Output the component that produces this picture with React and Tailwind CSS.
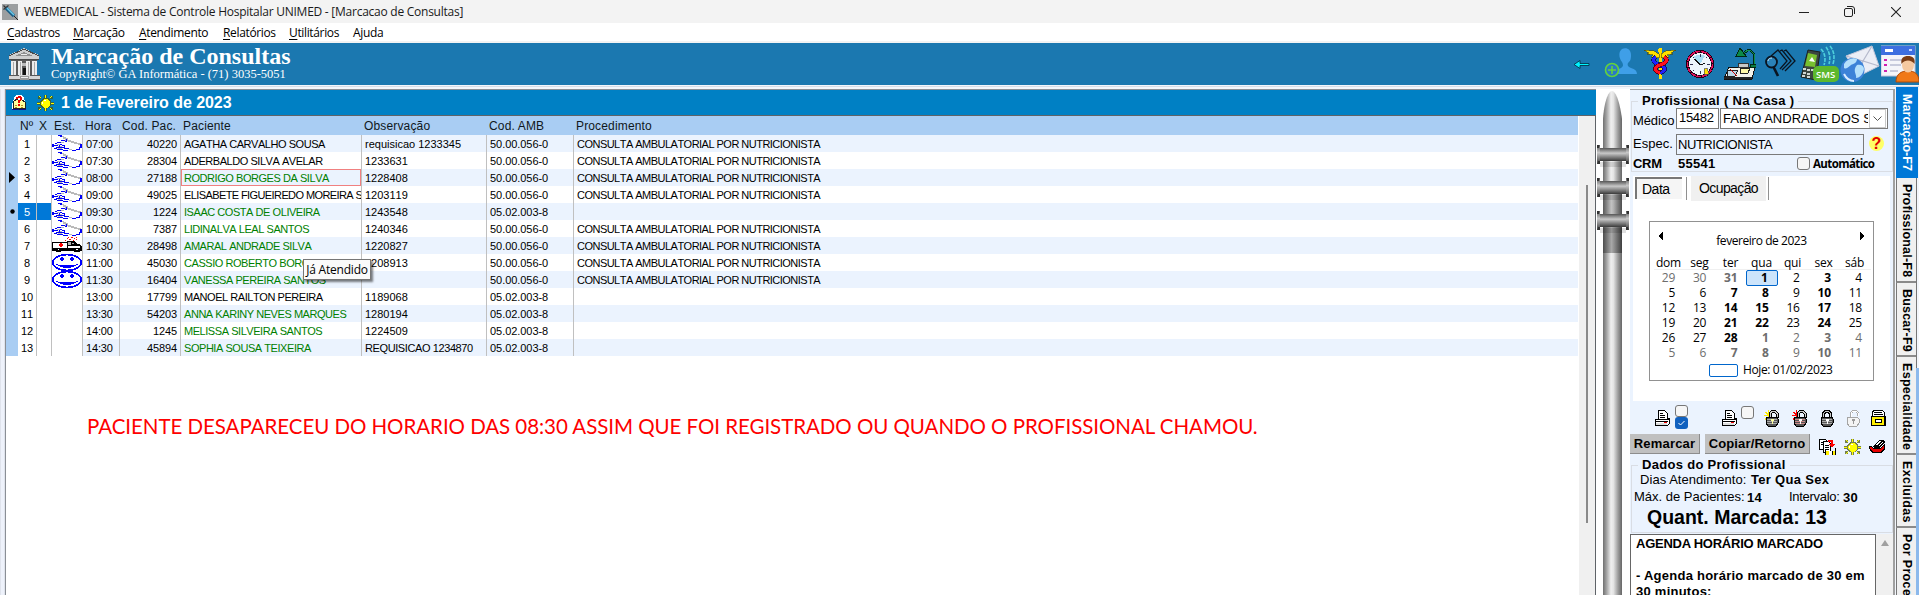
import React from "react";

const PROC = "CONSULTA AMBULATORIAL POR NUTRICIONISTA";
const A = "50.00.056-0";
const B = "05.02.003-8";

const ROWS = [
  { n: 1, icon: "hand", hora: "07:00", cod: "40220", nome: "AGATHA CARVALHO SOUSA", obs: "requisicao 1233345", amb: A, proc: PROC },
  { n: 2, icon: "hand", hora: "07:30", cod: "28304", nome: "ADERBALDO SILVA AVELAR", obs: "1233631", amb: A, proc: PROC },
  { n: 3, icon: "hand", hora: "08:00", cod: "27188", nome: "RODRIGO BORGES DA SILVA", obs: "1228408", amb: A, proc: PROC, green: true, focus: true, mark: "arrow" },
  { n: 4, icon: "hand", hora: "09:00", cod: "49025", nome: "ELISABETE FIGUEIREDO MOREIRA SANTOS", obs: "1203119", amb: A, proc: PROC },
  { n: 5, icon: "hand", hora: "09:30", cod: "1224", nome: "ISAAC COSTA DE OLIVEIRA", obs: "1243548", amb: B, proc: "", green: true, selected: true, mark: "dot" },
  { n: 6, icon: "hand", hora: "10:00", cod: "7387", nome: "LIDINALVA LEAL SANTOS", obs: "1240346", amb: A, proc: PROC, green: true },
  { n: 7, icon: "ambulance", hora: "10:30", cod: "28498", nome: "AMARAL ANDRADE SILVA", obs: "1220827", amb: A, proc: PROC, green: true },
  { n: 8, icon: "smile", hora: "11:00", cod: "45030", nome: "CASSIO ROBERTO BORGES", obs: "1208913", amb: A, proc: PROC, green: true },
  { n: 9, icon: "smile", hora: "11:30", cod: "16404", nome: "VANESSA PEREIRA SANTOS", obs: "", amb: A, proc: PROC, green: true },
  { n: 10, hora: "13:00", cod: "17799", nome: "MANOEL RAILTON PEREIRA", obs: "1189068", amb: B, proc: "" },
  { n: 11, hora: "13:30", cod: "54203", nome: "ANNA KARINY NEVES MARQUES", obs: "1280194", amb: B, proc: "", green: true },
  { n: 12, hora: "14:00", cod: "1245", nome: "MELISSA SILVEIRA SANTOS", obs: "1224509", amb: B, proc: "", green: true },
  { n: 13, hora: "14:30", cod: "45894", nome: "SOPHIA SOUSA TEIXEIRA", obs: "REQUISICAO 1234870", amb: B, proc: "", green: true },
];

const GRID = "grid shrink-0 grid-cols-[12px_19px_15px_31px_37px_61px_181px_125px_87px_1fr]";

function Svg({ w, h, className = "", smooth, children }) {
  return (
    <svg width={w} height={h} viewBox={`0 0 ${w} ${h}`} shapeRendering={smooth ? "auto" : "crispEdges"} className={`block shrink-0 ${className}`} fill="none">
      {children}
    </svg>
  );
}

/* ---------- table state icons ---------- */
const Hand = () => (
  <Svg w={30} h={17} className="overflow-visible">
    <path d="M10 1h2v1h2v1h2v2h3v1h3v1h3v1h4v2h-3V9h-4V8h-3V7h-3V6h-3V4h-2V2h-2z" fill="#b9b9b9" />
    <path d="M6 0h4v1H6zM8 1h2v1H8zM9 5h4v1H9zM13 6h2v1h-2zM5 7h4v1H5zM3 8h2v1H3zM0 9h2v3H0zM2 10h4v1H2zM8 9h2v1H8zM10 10h3v1h-3zM4 12h8v1H4zM2 13h3v1H2zM12 11h1v3h-1zM13 13h4v1h-4zM5 14h6v1H5zM11 15h5v1h-5zM20 15h4v1h-4zM24 14h4v1h-4zM28 9h2v4h-2zM27 12h1v2h-1z" fill="#0000f8" />
    <path d="M5 9h3v1H5zM6 11h4v1H6zM6 13h4v1H6zM9 7h3v1H9zM17 14h3v1h-3z" fill="#b9b9b9" />
    <path d="M7 10h1v3H7zM14 4h1v2h-1z" fill="#0000f8" />
  </Svg>
);
const Ambulance = () => (
  <Svg w={30} h={17}>
    <path d="M0 5h15V4h7l3 3h3l2 3v4H0z" fill="#000" />
    <path d="M1 6h14v5H1zM16 9h12v2H16z" fill="#fff" />
    <path d="M16 5h3v3h-3zM20 6h2v1h-2z" fill="#b0b0b0" />
    <path d="M8 6h2v1h1v2h-1v1H8V9H7V7h1z" fill="#f00" />
    <path d="M13 3h1v1h-1zM15 1h1v1h-1zM17 2h2v1h-2zM19 0h2v1h-2zM22 1h1v1h-1zM24 2h1v1h-1zM21 3h1v1h-1zM16 0h1v1h-1zM24 0h1v1h-1z" fill="#f00" />
    <path d="M4 11h5v4H4zM22 11h6v4h-6z" fill="#000" />
    <path d="M6 12h1v1H6zM24 12h2v1h-2z" fill="#fff" />
  </Svg>
);
const Smile = () => (
  <Svg w={30} h={17} className="overflow-visible">
    <ellipse cx="15" cy="8.500" rx="14" ry="8" fill="#fff" stroke="#0000ff" strokeWidth="1.800" />
    <path d="M9 3h2v1h1v2h-1v1H9V6H8V4h1zM19 3h2v1h1v2h-1v1h-2V6h-1V4h1zM4 10h2v1h18v-1h2v1h-2v1h-2v1h-3v1h-8v-1H8v-1H6v-1H4z" fill="#0000ff" />
  </Svg>
);
const STATE = { hand: Hand, ambulance: Ambulance, smile: Smile };

/* ---------- small icons ---------- */
const Syringe = () => (
  <Svg w={16} h={16} smooth>
    <rect width="16" height="16" fill="#9c9fa0" />
    <path d="M1.500 1.500l3 3M1.500 5.500l5-4" stroke="#333" strokeWidth="1.200" />
    <path d="M4 4l8 8" stroke="#1b5f86" strokeWidth="3.400" />
    <path d="M5 4l7 7" stroke="#6cc8e8" strokeWidth="1.600" />
    <path d="M12 12l4 4" stroke="#222" strokeWidth="1" />
  </Svg>
);

const Bank = () => (
  <Svg w={33} h={33}>
    <path d="M16 0l4 2 11 5v5H1V7l11-5z" fill="#cfcfcf" />
    <path d="M16 1l15 7M16 1L1 8M1 11.500h30" stroke="#4a4a4a" />
    <path d="M16 4l9 4H7z" fill="#8f8f8f" />
    <path d="M13 6h6v1h-6z" fill="#eee" />
    <path d="M3 12h26v16H3z" fill="#5a5a5a" />
    <path d="M3 13h5v14H3zM10 13h4v14h-4zM18 13h4v14h-4zM24 13h5v14h-5z" fill="#ececec" />
    <path d="M5 14h1v13H5zM12 14h1v13h-1zM20 14h1v13h-1zM26 14h1v13h-1z" fill="#a8a8a8" />
    <path d="M15 20h3v8h-3z" fill="#111" />
    <path d="M14 15h4v3h-4z" fill="#bbb" />
    <path d="M1 27h31v5H1z" fill="#d6d6d6" />
    <path d="M1 31.500h31M1 27.500h10M22 27.500h10" stroke="#5a5a5a" />
    <path d="M12 28h9v4h-9z" fill="#9a9a9a" />
    <path d="M13 29h7v1h-7z" fill="#eee" />
  </Svg>
);

const Book = () => (
  <Svg w={16} h={16}>
    <path d="M5 0h6l2 3 2 7v4H1v-4l2-7z" fill="#fff" />
    <path d="M2 7l4-3 2 2 2-2 4 3v7l-5-1-1 2-1-2-5 1z" fill="#ffff9c" stroke="#222" strokeWidth="1" />
    <path d="M5 2h2V1h3v1h1v3h-1v1H9v2H7V5h2V3H7v1H5z" fill="#e00" />
    <path d="M7 9h2v2H7z" fill="#e00" />
    <path d="M1 14h6l1 1 1-1h6v1H1z" fill="#111188" />
    <path d="M4 10h2M10 10h2M4 12h2M10 12h2" stroke="#b58a20" />
  </Svg>
);

const Sun = () => (
  <Svg w={17} h={16}>
    <path d="M7 0h3v3H7zM7 13h3v3H7zM0 7h3v3H0zM14 7h3v3h-3zM1 1h3v3H1zM13 1h3v3h-3zM1 12h3v3H1zM13 12h3v3h-3zM6 3h5l3 3v5l-3 2H6l-3-2V6z" fill="#4c5a10" opacity=".75" />
    <path d="M8 0h1v3H8zM8 13h1v3H8zM0 8h3v1H0zM14 8h3v1h-3zM2 1h1v1H2zM3 2h1v1H3zM14 1h1v1h-1zM13 2h1v1h-1zM2 14h1v1H2zM3 13h1v1H3zM14 14h1v1h-1zM13 13h1v1h-1zM7 4h3l3 3v3l-3 3H7l-3-3V7z" fill="#ffff00" />
    <path d="M7 5h2v1H7zM5 7h1v2H5z" fill="#fff" />
  </Svg>
);

const Printer = () => (
  <Svg w={17} h={17}>
    <path d="M4.500 .5h6l3 3v7h-9z" fill="#fff" stroke="#000" />
    <path d="M6 3.500h3M6 5.500h5M6 7.500h5" stroke="#000" />
    <path d="M1.500 9.500h12l2-1v5l-2 2h-12z" fill="#fff" stroke="#000" />
    <path d="M1 11.500h13" stroke="#000" />
    <path d="M2 13h11v2H2z" fill="#ddd" />
    <path d="M10 12h3v1h-3z" fill="#e00" />
  </Svg>
);

const Lock = ({ spark, open }) => (
  <Svg w={16} h={17}>
    {spark && <path d="M1 2l5 4M4.500 0v6M0 5.500h6M1 9l4-2" stroke={spark} strokeWidth="1.400" />}
    <path d={open ? "M6 8V3.500l2-2h3l2 2V8" : "M4.500 8V3.500l2-2h3l2 2V8"} stroke="#000" strokeWidth="3" />
    <path d={open ? "M6 8V3.500l2-2h3l2 2V8" : "M4.500 8V3.500l2-2h3l2 2V8"} stroke="#ccc" strokeWidth="1" />
    <path d="M3 7h10l1 2v4l-2 3H4l-2-3V9z" fill="#555" stroke="#000" />
    <path d="M3 9.500h10M3 11.500h10M3 13.500h10" stroke={spark === "#ff0000" ? "#c88" : "#aaa"} />
    <path d="M7 9h3v2H9v3H8v-3H7z" fill={spark === "#ffee00" ? "#ffffa0" : "#fff"} />
  </Svg>
);
const LockOff = () => (
  <Svg w={16} h={17}>
    <path d="M6 7V3l2-2h3l2 2v3" stroke="#aaa" strokeWidth="2" />
    <path d="M6 7V3l2-2h3l2 2v3" stroke="#fff" strokeWidth="1" />
    <path d="M3 7h9l2 2v4l-2 3H4l-2-3V9z" fill="#f4f4f4" stroke="#a5a5a5" />
    <path d="M7 9h3v2H9v3H8v-3H7z" fill="#999" />
  </Svg>
);
const CardBox = () => (
  <Svg w={17} h={17}>
    <path d="M3.500 .5h9l2 2v4h-12v-4z" fill="#fff" stroke="#000" />
    <path d="M4 2.500h8M4 4.500h9" stroke="#000" />
    <path d="M1 6h15v10H1z" fill="#000" />
    <path d="M2 7h12v8H2z" fill="#ffee00" />
    <path d="M5 9h7v4H5z" fill="#000" />
    <path d="M6 10h5v2H6z" fill="#fff" />
  </Svg>
);
const CopyDoc = () => (
  <Svg w={17} h={17}>
    <path d="M.5 .5h6l2 2v8h-8z" fill="#fff" stroke="#000" />
    <path d="M4.500 2.500h5l2 2v9h-7z" fill="#fff" stroke="#000" />
    <path d="M6 6.500h4M6 8.500h4M6 10.500h4M2 3.500h2M2 5.500h2" stroke="#000" />
    <path d="M9 1h5v4h2l-3 4-3-4h2V3H9z" fill="#f00" />
    <path d="M7 12h9v4H7z" fill="#ffee00" />
    <path d="M6.500 11v5M16 9v7M10 12v4M13 12v4" stroke="#000" />
    <path d="M10 12h3v4h-3z" fill="#fff" />
  </Svg>
);
const Tray = () => (
  <Svg w={17} h={17}>
    <path d="M4 8l6-6h5l1 2-5 6H5z" fill="#000" />
    <path d="M6 7l4-4h2L8 7zM9 8l4-4h1l-4 4zM11 9l4-4v1l-3 3z" fill="#fff" />
    <path d="M0 8h3l1 2h7l5-4v5l-3 4H3l-2-2z" fill="#000" />
    <path d="M1 9h2l1 2h7l4-3v2l-3 4H4l-2-2z" fill="#e80000" />
  </Svg>
);

const Box = ({ className = "" }) => <span className={`block h-[13px] w-[13px] shrink-0 rounded-[3px] border border-[#777] bg-[#f6f6f6] ${className}`} />;

/* ---------- toolbar icons ---------- */
function Toolbar() {
  return (
    <div className="flex h-full items-center">
      <Svg w={17} h={9} smooth className="mr-[14px]">
        <path d="M1 4.500l6-4v3h9v2H7v3z" fill="#00f4ff" stroke="#002a3c" strokeWidth=".8" />
      </Svg>
      <Svg w={33} h={32} smooth className="mr-[7px]">
        <path d="M18 1c5-2 9 1 9 6s-1 6-3 8c-1 2 0 4 3 5 4 1 6 3 6 6H12c0-4 2-5 5-6 3-2 2-4 1-6-3-4-4-10 0-13z" fill="#3f9fe8" />
        <circle cx="8" cy="22" r="6.500" fill="#2a78c8" stroke="#63d23c" strokeWidth="1.600" />
        <path d="M8 18v8M4 22h8" stroke="#63d23c" strokeWidth="1.600" />
      </Svg>
      <Svg w={32} h={32} className="mr-[10px]">
        <path d="M16 0v31" stroke="#ffe000" strokeWidth="3" />
        <path d="M0 2l10 1 5 3v4L7 9l2-2-6-1 2-1zM32 2L22 3l-5 3v4l8-1-2-2 6-1-2-1z" fill="#ffe000" stroke="#4a4a10" strokeWidth=".6" />
        <path d="M12 9c-5 3-2 6 4 8s7 5 0 8" stroke="#101060" strokeWidth="4.500" />
        <path d="M12 9c-5 3-2 6 4 8s7 5 0 8" stroke="#2020ff" strokeWidth="3" />
        <path d="M20 9c5 3 2 6-4 8s-7 5 0 8" stroke="#600010" strokeWidth="4.500" />
        <path d="M20 9c5 3 2 6-4 8s-7 5 0 8" stroke="#ff1020" strokeWidth="3" />
        <circle cx="16" cy="2" r="2" fill="#ffe000" />
        <path d="M15 27h2v4h-2z" fill="#ffe000" />
      </Svg>
      <Svg w={28} h={28} className="mr-[10px]">
        <circle cx="14" cy="14" r="12.500" fill="#eef6fc" stroke="#200012" strokeWidth="3" />
        <circle cx="14" cy="14" r="12.500" stroke="#e0105c" strokeWidth="1.600" strokeDasharray="5 1" />
        <path d="M7 7l7 7 5-8c-4-2-8-2-12 1z" fill="#a8dcf4" />
        <path d="M14 4v3M14 21v3M4 14h3M21 14h3M7 7l1 1M20 20l1 1M21 7l-1 1M7 21l1-1" stroke="#335" />
        <path d="M8 9l7 6 4-2" stroke="#111" strokeWidth="1.200" />
        <path d="M18 19l3-1 2 6h-5z" fill="#ffe000" stroke="#555" strokeWidth=".7" />
      </Svg>
      <Svg w={32} h={32} className="mr-[8px]">
        <path d="M5 19h26l-3 12H0z" fill="#f2f2ea" stroke="#111" />
        <path d="M0 29h28v2H0z" fill="#222" />
        <path d="M4 22h10l-3 6H3z" fill="#bcd8e8" stroke="#222" />
        <path d="M6 21l7 7" stroke="#c00" />
        <path d="M16 20h10l-2 5h-8z" fill="#fff9a8" stroke="#222" />
        <path d="M14 15h10v4H14z" fill="#c8c8c8" stroke="#333" />
        <path d="M17 7l7-5h2l4 4v12" stroke="#002814" strokeWidth="2.500" />
        <path d="M17 7l7-5h2l4 4v12" stroke="#109050" />
        <path d="M16 0l-4 8h10z" fill="#0c8a48" stroke="#002814" />
        <path d="M26 16h6v3h-6z" fill="#0c7a40" stroke="#002814" />
      </Svg>
      <Svg w={32} h={32} smooth className="mr-[3px]">
        <path d="M7 8l7-6 9 11-7 8M16 3l2-1 9 11-9 9M20 3l2-1 9 11-10 10" stroke="#0a1420" strokeWidth="1.300" />
        <circle cx="7.500" cy="14" r="5.500" stroke="#0a1420" strokeWidth="1.800" fill="#2b82b8" />
        <path d="M4 13c0-2 2-3 4-3" stroke="#cfe6f4" />
        <path d="M9.500 19l4.500 9" stroke="#0a1420" strokeWidth="2.600" />
      </Svg>
      <Svg w={41} h={38} smooth className="mr-0">
        <path d="M9 5l12 2-4 28-15-3z" fill="#3c4640" stroke="#1a201c" />
        <path d="M9 8l9 2-2 12-10-1z" fill="#78c030" />
        <path d="M13 12l3 5-6-1z" fill="#fff" />
        <path d="M4 24h3M8 25h3M12 25h3M4 28h3M8 29h3M3 31h3M8 32h3" stroke="#cfd6d2" strokeWidth="1.800" />
        <path d="M22 4c4 4 5 10 3 16M27 2c3 4 5 10 3 17M31 1c4 5 5 11 3 18" stroke="#4fd0dc" strokeWidth="1.600" strokeDasharray="4 1" />
        <rect x="14" y="21" width="26" height="16" rx="5" fill="#5db82c" />
        <text x="17" y="33" fontFamily="'Open Sans',sans-serif" fontSize="9.500" fontWeight="600" fill="#fff">SMS</text>
      </Svg>
      <Svg w={41} h={38} smooth>
        <path d="M6 11L32 1l7 20-20 10z" fill="#eceef6" stroke="#c4c8da" />
        <path d="M6 11l17 5 9-15M18 31l5-15 16 5" stroke="#b5b9cc" strokeWidth="1.200" />
        <circle cx="12.500" cy="25" r="12" fill="#3c82d8" />
        <path d="M4 19c3-5 9-7 13-5 0 4-4 5-6 6s-4 5-7 3zM17 20c4-1 7 1 7 4-1 6-5 9-8 9 1-4-4-7 1-13z" fill="#b4e0fc" />
        <path d="M4 29c2 4 6 7 10 7" stroke="#d8ecff" strokeWidth="2" />
      </Svg>
      <Svg w={38} h={38} smooth>
        <rect x="0" y="1" width="34" height="30" fill="#f4f5fa" stroke="#c0c4d8" />
        <rect x="0" y="1" width="34" height="9" fill="#3d6fe0" />
        <path d="M4 4h8v3H4z" fill="#fff" />
        <path d="M28 5h3" stroke="#c8d8ff" strokeWidth="2" />
        <path d="M3 15h3M3 20h3M3 26h3" stroke="#d020b0" strokeWidth="2" />
        <path d="M9 15h14M9 20h11M9 26h8" stroke="#9aa0c0" />
        <path d="M15 37c0-8 5-11 12-11s11 3 11 11z" fill="#f07818" stroke="#b04c08" />
        <ellipse cx="27" cy="20" rx="6" ry="7.500" fill="#f6c9a0" />
        <path d="M20.500 19c-1-6 2-8 6.500-8s7.500 2 6.500 8c-3-4-9-5-13 0z" fill="#7a3c14" />
      </Svg>
    </div>
  );
}

const MENU = [
  ["C", "adastros", "w-[66px]"],
  ["M", "arcação", "w-[66px]"],
  ["A", "tendimento", "w-[84px]"],
  ["R", "elatórios", "w-[66px]"],
  ["U", "tilitários", "w-[64px]"],
];

function WindowChrome() {
  return (
    <>
      <div className="flex h-[23px] items-center bg-[#f3f3f3] pl-[2px]">
        <Syringe />
        <span className="ml-[6px] grow font-['Open_Sans',sans-serif] text-[12px] leading-[23px] tracking-[-0.250px] text-[#1a1a1a]">
          WEBMEDICAL - Sistema de Controle Hospitalar UNIMED - [Marcacao de Consultas]
        </span>
        <div className="flex items-center pr-[18px]">
          <Svg w={10} h={10} className="mr-[35px]"><path d="M0 5.500h10" stroke="#222" /></Svg>
          <Svg w={11} h={11} smooth className="mr-[36px]">
            <rect x="0.500" y="2.500" width="8" height="8" rx="1.500" stroke="#222" />
            <path d="M3 .5h5a2.500 2.500 0 0 1 2.500 2.500v5" stroke="#222" />
          </Svg>
          <Svg w={10} h={10} smooth><path d="M0 0l10 10M10 0L0 10" stroke="#222" strokeWidth="1.100" /></Svg>
        </div>
      </div>
      <nav className="flex h-[20px] border-b-2 border-[#f3f3f3] bg-white pl-[7px] font-['Open_Sans',sans-serif] text-[12px] leading-[20px] tracking-[-0.350px] text-black">
        {MENU.map(([k, rest, w]) => (
          <span key={k} className={w}><u className="underline-offset-2">{k}</u>{rest}</span>
        ))}
        <span>A<u className="underline-offset-2">j</u>uda</span>
      </nav>
    </>
  );
}

function Banner() {
  return (
    <header className="flex h-[42px] items-center bg-[#1b78b0] pl-[8px]">
      <Bank />
      <div className="-mt-[3px] ml-[10px] grow font-['Liberation_Serif',serif] text-white">
        <div className="text-[24px] font-bold leading-[24px]">Marcação de Consultas</div>
        <div className="-mt-px text-[12.500px] leading-[15px]">CopyRight© GA Informática - (71) 3035-5051</div>
      </div>
      <Toolbar />
    </header>
  );
}

function Row({ r, i }) {
  const Icon = STATE[r.icon];
  const stripe = i % 2 === 0 ? "bg-[#ebf3fe]" : "bg-white";
  const line = "border-r border-[#c0c0c0]";
  const cell = `${stripe} ${line} overflow-hidden whitespace-nowrap`;
  return (
    <div className={`${GRID} h-[17px] auto-rows-[17px] text-[11px] leading-[18px] text-black [font-kerning:none]`}>
      <div className="flex items-center justify-center bg-[#a9cdf3]">
        {r.mark === "arrow" && <Svg w={6} h={11} smooth><path d="M0 0l6 5.500L0 11z" fill="#000" /></Svg>}
        {r.mark === "dot" && <Svg w={5} h={5} smooth><circle cx="2.500" cy="2.500" r="2.200" fill="#000" /></Svg>}
      </div>
      <div className={`border-r border-[#c0c0c0] text-center ${r.selected ? "bg-[#0078d7] text-white" : "bg-white"}`}>{r.n}</div>
      <div className={`border-r border-[#c0c0c0] ${r.selected ? "bg-[#0078d7]" : "bg-white"}`} />
      <div className="border-r border-[#c0c0c0] bg-white">{Icon && <Icon />}</div>
      <div className={`${cell} pl-[3px] tracking-[-0.150px]`}>{r.hora}</div>
      <div className={`${cell} pr-[3px] text-right tracking-[-0.100px]`}>{r.cod}</div>
      <div className={`${cell} ${r.n === 4 ? "tracking-[-0.600px]" : "tracking-[-0.450px]"} ${r.green ? "text-[#008000]" : ""} ${r.focus ? "py-0" : "pl-[3px]"}`}>
        {r.focus ? <div className="h-[17px] border border-[#f08080] pl-[2px] leading-[16px]">{r.nome}</div> : r.nome}
      </div>
      <div className={`${cell} pl-[3px] ${r.n === 13 ? "tracking-[-0.400px]" : ""}`}>{r.obs}</div>
      <div className={`${cell} pl-[3px] tracking-[-0.050px]`}>{r.amb}</div>
      <div className={`${stripe} whitespace-nowrap pl-[3px] tracking-[-0.520px]`}>{r.proc}</div>
    </div>
  );
}

function Agenda() {
  return (
    <main className="flex h-[506px] w-[1591px] flex-col border-l border-t border-[#8a8f96] bg-white">
      <div className="flex h-[25px] items-center bg-[#0080c4] pl-[5px]">
        <Book />
        <div className="ml-[10px]"><Sun /></div>
        <span className="ml-[7px] text-[16px] font-bold tracking-[-0.050px] text-white">1 de Fevereiro de 2023</span>
      </div>
      <div className="flex grow border-r border-t border-[#5f6368]">
        <div className="relative flex grow flex-col">
          <div className={`${GRID} h-[19px] bg-[#a9cdf3] text-[12px] leading-[20px] tracking-[0.150px] text-[#101820]`}>
            <span />
            <span className="pl-[2px]">Nº</span>
            <span className="pl-[2px]">X</span>
            <span className="pl-[2px]">Est.</span>
            <span className="pl-[2px]">Hora</span>
            <span className="pl-[2px]">Cod. Pac.</span>
            <span className="pl-[2px]">Paciente</span>
            <span className="pl-[2px]">Observação</span>
            <span className="pl-[2px]">Cod. AMB</span>
            <span className="pl-[2px]">Procedimento</span>
          </div>
          {ROWS.map((r, i) => <Row key={r.n} r={r} i={i} />)}
          <p className="ml-[81px] mt-[55px] whitespace-nowrap font-['Lato',sans-serif] text-[20.500px] leading-[30px] tracking-[-0.050px] text-[#fe0000]">
            PACIENTE DESAPARECEU DO HORARIO DAS 08:30 ASSIM QUE FOI REGISTRADO OU QUANDO O PROFISSIONAL CHAMOU.
          </p>
          <div className="absolute left-[297px] top-[143px] flex h-[21px] w-[68px] items-center justify-center border border-[#767676] bg-[#fafafa] pt-px font-['Open_Sans',sans-serif] text-[12px] tracking-[-0.200px] text-black shadow-[2px_2px_2px_rgba(0,0,0,0.5)]">
            Já Atendido
          </div>
        </div>
        <div className="flex w-[17px] justify-center border-l border-white bg-[#f0f0f0] pt-[69px]">
          <div className="h-[338px] w-[2px] bg-[#8a8a8a]" />
        </div>
      </div>
    </main>
  );
}

function Spine() {
  return (
    <div className="h-[506px] w-[34px] bg-white">
      <svg width="34" height="506" viewBox="0 0 34 506" className="block">
        <defs>
          <linearGradient id="tube" x1="0" x2="1">
            <stop offset="0" stopColor="#707070" /><stop offset=".2" stopColor="#a8a8a8" /><stop offset=".42" stopColor="#efefef" /><stop offset=".55" stopColor="#e4e4e4" /><stop offset=".8" stopColor="#9a9a9a" /><stop offset="1" stopColor="#666" />
          </linearGradient>
          <linearGradient id="dark" x1="0" x2="1">
            <stop offset="0" stopColor="#4a4a4a" /><stop offset=".45" stopColor="#a4a4a4" /><stop offset="1" stopColor="#3c3c3c" />
          </linearGradient>
          <linearGradient id="ring" x1="0" x2="0" y1="0" y2="1">
            <stop offset="0" stopColor="#555" /><stop offset=".4" stopColor="#c8c8c8" /><stop offset="1" stopColor="#3a3a3a" />
          </linearGradient>
        </defs>
        <path d="M7 506V30C8 14 12 2 16 2s8 12 10 28v476z" fill="url(#tube)" />
        <path d="M7 104h19v60H7z" fill="url(#dark)" opacity=".6" />
        <path d="M7 138h19v26H7z" fill="url(#dark)" opacity=".85" />
        {[59, 92, 125].map((y) => (
          <g key={y}>
            <path d={`M4 ${y + 14}h26v5H4z`} fill="#000" opacity=".12" />
            <rect x="2" y={y} width="30" height="13" fill="url(#ring)" />
            <path d={`M1 ${y - 3}h3v19H1zM30 ${y - 3}h3v19h-3z`} fill="url(#ring)" />
            <path d={`M1 ${y - 3}h2v3H1zM31 ${y - 3}h2v3h-2zM2 ${y + 13}h2v3H2zM30 ${y + 13}h2v3h-2z`} fill="#333" />
          </g>
        ))}
      </svg>
    </div>
  );
}

const WEEKDAYS = ["dom", "seg", "ter", "qua", "qui", "sex", "sáb"];
const DAYS = [29, 30, 31, 1, 2, 3, 4, 5, 6, 7, 8, 9, 10, 11, 12, 13, 14, 15, 16, 17, 18, 19, 20, 21, 22, 23, 24, 25, 26, 27, 28, 1, 2, 3, 4, 5, 6, 7, 8, 9, 10, 11];

function Calendar() {
  return (
    <div className="ml-[16px] mt-[20px] h-[160px] w-[225px] border border-[#919191] px-[4px] font-['Open_Sans',sans-serif] text-[12px] tracking-[-0.200px] text-black">
      <div className="flex h-[36px] items-center justify-between pl-[4px] pr-[4px]">
        <Svg w={5} h={8} className="-mt-[8px]"><path d="M5 0v8L0 4z" fill="#000" /></Svg>
        <span className="mt-[2px] tracking-[-0.450px]">fevereiro de 2023</span>
        <Svg w={5} h={8} className="-mt-[8px]"><path d="M0 0v8l5-4z" fill="#000" /></Svg>
      </div>
      <div className="grid h-[12px] w-[217px] grid-cols-7 border-b border-[#f0f0f0] text-center">
        {WEEKDAYS.map((d) => <span key={d} className="pr-[2px] leading-[9px]">{d}</span>)}
      </div>
      <div className="grid w-[218px] auto-rows-[15px] grid-cols-7">
        {DAYS.map((d, i) => {
          const bold = [2, 3, 5].includes(i % 7);
          const dim = i < 3 || i > 30;
          const today = i === 3;
          return (
            <span
              key={i}
              className={`pr-[10px] text-right leading-[15px] ${bold ? "font-bold" : ""} ${dim ? "text-[#6d6d6d]" : ""} ${today ? "mb-[-1px] mr-[1px] -ml-[1px] mt-0 rounded-[2px] border border-[#0066cc] bg-[#cce4fb] !pr-[9px] !leading-[14px]" : ""}`}
            >
              {d}
            </span>
          );
        })}
      </div>
      <div className="flex items-center pl-[55px] pt-[3px]">
        <span className="mr-[5px] block h-[13px] w-[29px] rounded-[2px] border border-[#0066cc]" />
        <span className="leading-[14px] tracking-[-0.400px]">Hoje: 01/02/2023</span>
      </div>
    </div>
  );
}

function Group({ title, className, children }) {
  return (
    <fieldset className={`ml-[1px] w-[262px] shrink-0 border border-[#d9dde4] ${className}`}>
      <legend className="ml-[6px] px-[4px] text-[13px] font-bold leading-[14px] tracking-[0.300px] text-black">{title}</legend>
      {children}
    </fieldset>
  );
}

function SidePanel() {
  return (
    <aside className="flex h-[506px] w-[265px] flex-col overflow-hidden border-r-2 border-t border-[#a0a0a0] bg-[#ebf3fe] text-[13px] text-black">
      <Group title="Profissional ( Na Casa )" className="mt-[4px] h-[78px]">
        <div className="flex h-[21px] pl-[1px]">
          <span className="w-[43px] pt-[5px] leading-[16px] tracking-[-0.100px]">Médico</span>
          <span className="h-[21px] w-[43px] border border-[#7a7a7a] bg-white pl-[2px] leading-[18px] tracking-[-0.300px]">15482</span>
          <span className="ml-[1px] flex h-[21px] w-[168px] border border-[#7a7a7a] bg-white">
            <span className="w-[147px] overflow-hidden whitespace-nowrap pl-[2px] leading-[19px]">FABIO ANDRADE DOS SANTOS</span>
            <span className="ml-px flex w-[17px] items-center justify-center border border-[#c8c8c8]">
              <Svg w={9} h={5} smooth><path d="M.5.5l4 4 4-4" stroke="#555" /></Svg>
            </span>
          </span>
        </div>
        <div className="mt-[5px] flex h-[21px] pl-[1px]">
          <span className="w-[43px] leading-[20px]">Espec.</span>
          <span className="h-[21px] w-[188px] border border-[#7a7a7a] pl-[1px] leading-[19px] tracking-[-0.450px]">NUTRICIONISTA</span>
          <span className="ml-[5px] mt-[2px] flex h-[15px] w-[15px] items-center justify-center rounded-full bg-[#ffff66] text-[16px] font-bold text-[#e00000]">?</span>
        </div>
        <div className="flex h-[16px] items-center pl-[1px] pt-[2px] font-bold">
          <span className="w-[45px] leading-[16px] tracking-[-0.300px]">CRM</span>
          <span className="w-[119px] text-[13px] tracking-[0.300px]">55541</span>
          <Box className="-mt-[2px]" />
          <span className="ml-[3px] font-['Open_Sans',sans-serif] text-[11.500px] tracking-[-0.600px]">Automático</span>
        </div>
      </Group>
      <section className="ml-[3px] mt-[4px] h-[225px] w-[257px] shrink-0 bg-white">
        <div className="flex h-[25px] items-start text-[14px]">
          <div className="ml-[2px] mt-[1px] h-[22px] w-[47px] border-l-2 border-t-2 border-l-[#777] border-t-[#777] bg-[#f5f5f5] pl-[5px] leading-[20px] tracking-[-0.500px]">Data</div>
          <div className="mx-[4px] mt-[1px] h-[23px] w-px bg-[#909090]" />
          <div className="h-[25px] w-[75px] bg-[#f0f0f0] pl-[8px] leading-[24px] tracking-[-0.600px]">Ocupação</div>
          <div className="ml-[2px] mt-[1px] h-[23px] w-px bg-[#909090]" />
        </div>
        <Calendar />
      </section>
      <div className="flex h-[33px] shrink-0 items-start">
        <div className="ml-[24px] mt-[9px]"><Printer /></div>
        <div className="ml-[4px] mt-[4px]">
          <Box className="!h-[12px]" />
          <span className="flex h-[12px] w-[13px] items-center justify-center rounded-[3px] bg-[#1161bf]">
            <Svg w={7} h={6} smooth><path d="M.5 3l2 2 4-4" stroke="#fff" /></Svg>
          </span>
        </div>
        <div className="ml-[33px] mt-[9px]"><Printer /></div>
        <Box className="ml-[3px] mt-[5px]" />
        <div className="ml-[10px] mt-[9px]"><Lock spark="#ffee00" open /></div>
        <div className="ml-[12px] mt-[9px]"><Lock spark="#ff0000" open /></div>
        <div className="ml-[11px] mt-[9px]"><Lock /></div>
        <div className="ml-[10px] mt-[9px]"><LockOff /></div>
        <div className="ml-[9px] mt-[9px]"><CardBox /></div>
      </div>
      <div className="flex h-[20px] shrink-0 items-center text-[13px] font-bold">
        <span className="flex h-[20px] w-[70px] items-center justify-center border-b border-r border-[#8d8d8d] bg-[#c0c0c0] tracking-[0.200px]">Remarcar</span>
        <span className="ml-[5px] flex h-[20px] w-[105px] items-center justify-center border-b border-r border-[#8d8d8d] bg-[#c0c0c0] tracking-[0.150px]">Copiar/Retorno</span>
        <div className="ml-[9px] mt-[6px]"><CopyDoc /></div>
        <div className="ml-[8px] mt-[6px]"><Sun /></div>
        <div className="ml-[8px] mt-[4px]"><Tray /></div>
      </div>
      <Group title="Dados do Profissional" className="mt-[4px] h-[75px]">
        <div className="flex h-[16px] items-center pl-[8px]">
          <span className="w-[111px] tracking-[0.050px]">Dias Atendimento:</span>
          <span className="text-[13px] font-bold tracking-[0.300px]">Ter Qua Sex</span>
        </div>
        <div className="flex h-[17px] items-center pl-[2px]">
          <span className="w-[113px]">Máx. de Pacientes:</span>
          <span className="w-[42px] pt-[2px] text-[13px] font-bold tracking-[0.300px]">14</span>
          <span className="w-[54px] tracking-[-0.300px]">Intervalo:</span>
          <span className="pt-[2px] text-[13px] font-bold tracking-[0.300px]">30</span>
        </div>
        <div className="pl-[15px] text-[19.500px] font-bold leading-[24px]">Quant. Marcada: 13</div>
      </Group>
      <div className="mt-[1px] flex h-[61px] shrink-0 overflow-hidden">
        <div className="h-[80px] w-[246px] shrink-0 border border-[#666] bg-white pl-[5px] pt-[1px] text-[13px] font-bold leading-[16px]">
          <p className="tracking-[-0.250px]">AGENDA HORÁRIO MARCADO</p>
          <p className="mt-[16px] tracking-[0.250px]">- Agenda horário marcado de 30 em<br />30 minutos;</p>
        </div>
        <div className="h-[80px] w-[17px] bg-[#f0f0f0] pl-[5px] pt-[6px]"><Svg w={8} h={6} smooth><path d="M4 0l4 6H0z" fill="#a0a0a0" /></Svg></div>
      </div>
    </aside>
  );
}

const TABS = [
  { t: "Marcação-F7", c: "h-[91px] bg-[#0078d7] text-white pt-[7px] tracking-[0.050px]" },
  { t: "Profissional-F8", c: "h-[105px] pt-[6px] tracking-[0.200px]" },
  { t: "Buscar-F9", c: "h-[74px] pt-[6px] tracking-[0.200px]" },
  { t: "Especialidade", c: "h-[98px] pt-[6px] tracking-[0.300px]" },
  { t: "Excluídas", c: "h-[73px] pt-[6px] tracking-[0.400px]" },
  { t: "Por Procedimento", c: "h-[80px] pt-[6px] tracking-[0.350px]" },
];

function SideTabs() {
  return (
    <div className="-mt-[2px] flex h-[508px] w-[24px] overflow-hidden bg-[#f3f6fb]">
      <div className="ml-px w-[20px] shrink-0">
        {TABS.map(({ t, c }, i) => (
          <div
            key={t}
            className={`flex w-[20px] items-center whitespace-nowrap pl-px text-[12.500px] font-bold [writing-mode:vertical-rl] ${i ? "border-b-2 border-l border-b-[#8a8a8a] border-l-[#777] bg-[#f0f0f0] text-black" : ""} ${c}`}
          >
            {t}
          </div>
        ))}
      </div>
      <div className="w-[3px] shrink-0">
        <div className="h-[91px] w-[2px] bg-[#0078d7]" />
        <div className="h-[190px] border-l border-[#777]" />
        <div className="h-[230px] bg-[#8cb9ec]" />
      </div>
    </div>
  );
}

export default function App() {
  return (
    <div className="h-[595px] w-[1919px] overflow-hidden bg-[#f3f6fb] font-['Liberation_Sans',Arial,sans-serif]">
      <WindowChrome />
      <Banner />
      <div className="mt-px h-[3px] border-t border-[#d5dbe6]" />
      <div className="flex">
        <div className="h-[506px] w-[5px] border-x border-[#dfe3ec] bg-[#eef2fb]" />
        <Agenda />
        <Spine />
        <SidePanel />
        <SideTabs />
      </div>
    </div>
  );
}
